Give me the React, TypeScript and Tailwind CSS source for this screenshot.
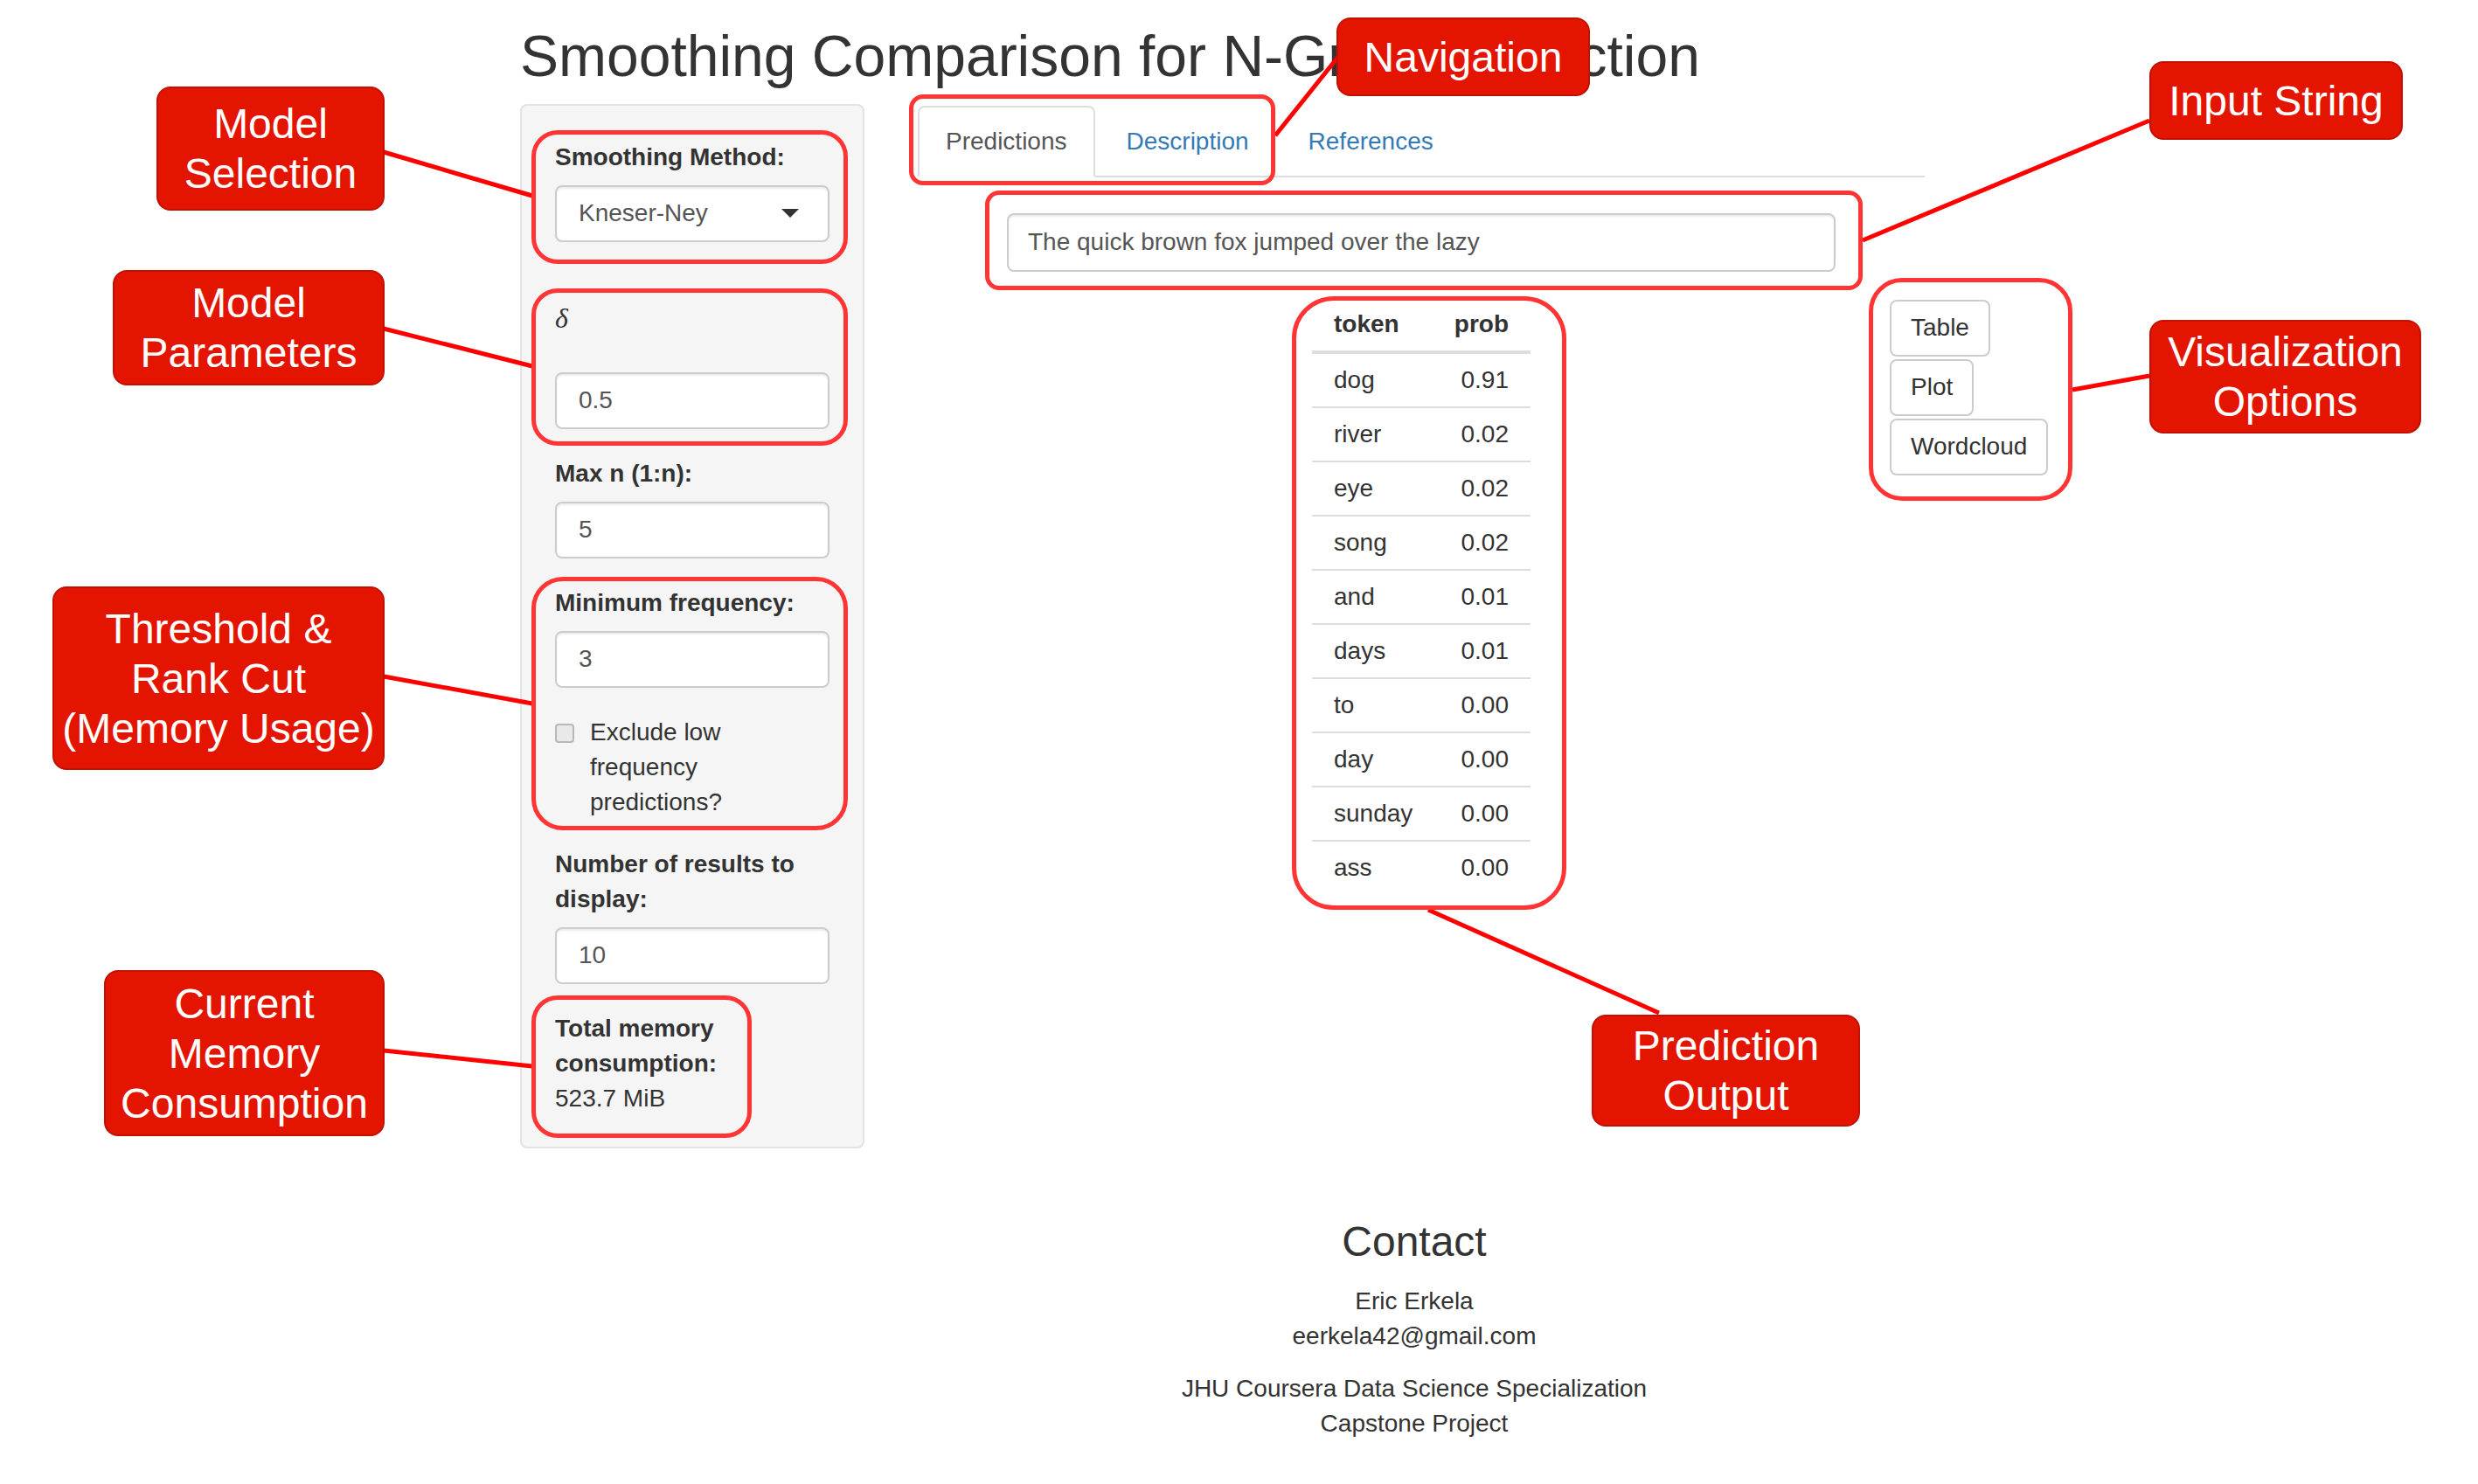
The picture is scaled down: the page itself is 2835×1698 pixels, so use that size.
import clsx from "clsx";

const rows: [string, string][] = [
  ["dog", "0.91"],
  ["river", "0.02"],
  ["eye", "0.02"],
  ["song", "0.02"],
  ["and", "0.01"],
  ["days", "0.01"],
  ["to", "0.00"],
  ["day", "0.00"],
  ["sunday", "0.00"],
  ["ass", "0.00"],
];

const inputCls =
  "h-[65px] bg-white border-2 border-[#ccc] rounded-[8px] shadow-[inset_0_2px_2px_rgba(0,0,0,0.075)] pl-[25px] flex items-center text-[#555]";

const Label = ({ children, className }: { children: React.ReactNode; className?: string }) => (
  <div className={clsx("font-bold mb-[12px]", className)}>{children}</div>
);

const Outline = ({ className }: { className: string }) => (
  <div className={clsx("absolute border-[5px] border-[#ff3535] pointer-events-none", className)} />
);

const Callout = ({ className, children }: { className: string; children: React.ReactNode }) => (
  <div
    className={clsx(
      "absolute bg-[#e31500] border-2 border-[#c21100] rounded-[16px] text-white text-[48px] leading-[57px] text-center flex items-center justify-center",
      className
    )}
  >
    <div>{children}</div>
  </div>
);

const lines = [
  [439, 174, 609, 224],
  [439, 376, 609, 419],
  [439, 774, 609, 805],
  [439, 1202, 609, 1220],
  [1459, 155, 1531, 65],
  [2131, 275, 2459, 138],
  [2371, 446, 2459, 430],
  [1634, 1041, 1898, 1159],
];

export default function App() {
  return (
    <div className="relative w-[2835px] h-[1698px] overflow-hidden bg-white text-[#333] font-['Liberation_Sans',Arial,sans-serif] text-[28px] leading-[40px]">
      <div className="pl-[595px] pt-[28px]">
        <h1 className="text-[66px] leading-[1.1] font-normal mb-[18px]">
          Smoothing Comparison for N-Gram Prediction
        </h1>

        <div className="flex items-start">
          {/* sidebar */}
          <aside className="w-[394px] bg-[#f5f5f5] border-2 border-[#e3e3e3] rounded-[8px] px-[38px] pt-[39px] pb-[35px]">
            <Label>Smoothing Method:</Label>
            <div className={clsx(inputCls, "justify-between pr-[33px] text-[#333] mb-[31px]")}>
              <span>Kneser-Ney</span>
              <svg width="20" height="10" viewBox="0 0 20 10">
                <polygon points="0,0 20,0 10,10" fill="#333" />
              </svg>
            </div>

            <div className="h-[106px] pt-[40px] mb-[12px]">
              <div className="font-['Liberation_Serif',serif] italic text-[32px] leading-none">δ</div>
            </div>
            <div className={clsx(inputCls, "mb-[31px]")}>0.5</div>

            <Label>Max n (1:n):</Label>
            <div className={clsx(inputCls, "mb-[31px]")}>5</div>

            <Label>Minimum frequency:</Label>
            <div className={clsx(inputCls, "mb-[31px]")}>3</div>

            <div className="flex items-start mb-[31px]">
              <div className="w-[22px] h-[22px] mt-[10px] mr-[18px] shrink-0 rounded-[4px] border-2 border-[#b8b8b8] bg-[#e9e9e9]" />
              <div>Exclude low frequency predictions?</div>
            </div>

            <Label>Number of results to display:</Label>
            <div className={clsx(inputCls, "mb-[31px]")}>10</div>

            <div className="font-bold">Total memory consumption:</div>
            <div>523.7 MiB</div>
          </aside>

          {/* main panel */}
          <main className="ml-[61px] w-[1152px] mt-[2px]">
            <nav className="flex border-b-2 border-[#ddd]">
              <div className="-mb-[2px] h-[82px] px-[30px] mr-[4px] flex items-center rounded-t-[8px] border-2 border-[#ddd] border-b-white bg-white text-[#555]">
                Predictions
              </div>
              <div className="-mb-[2px] h-[82px] px-[30px] mr-[4px] flex items-center border-2 border-transparent text-[#337ab7]">
                Description
              </div>
              <div className="-mb-[2px] h-[82px] px-[30px] mr-[4px] flex items-center border-2 border-transparent text-[#337ab7]">
                References
              </div>
            </nav>

            <div className="mx-auto mt-[41px] w-[948px] h-[67px] bg-white border-2 border-[#ccc] rounded-[8px] shadow-[inset_0_2px_2px_rgba(0,0,0,0.075)] pl-[22px] flex items-center text-[#555]">
              The quick brown fox jumped over the lazy
            </div>

            <div className="grid grid-cols-[451px_250px_451px] mt-[30px] items-start">
              <div />
              <div>
                <div className="flex h-[64px] items-center border-b-4 border-[#ddd] font-bold">
                  <div className="w-[125px] pl-[25px]">token</div>
                  <div className="flex-1 text-right pr-[25px]">prob</div>
                </div>
                {rows.map(([t, p], i) => (
                  <div
                    key={t}
                    className={clsx("flex h-[60px] items-center box-content", i > 0 && "border-t-2 border-[#ddd]")}
                  >
                    <div className="w-[125px] pl-[25px]">{t}</div>
                    <div className="flex-1 text-right pr-[25px]">{p}</div>
                  </div>
                ))}
              </div>
              <div className="pl-[411px] flex flex-col items-start gap-[3px] pt-[2px]">
                {["Table", "Plot", "Wordcloud"].map((b) => (
                  <div
                    key={b}
                    className="h-[65px] px-[22px] flex items-center bg-white border-2 border-[#ccc] rounded-[8px] whitespace-nowrap"
                  >
                    {b}
                  </div>
                ))}
              </div>
            </div>
          </main>
        </div>

        {/* footer */}
        <footer className="ml-[455px] w-[1136px] mt-[81px] text-center">
          <h3 className="text-[48px] leading-[1.1] font-normal">Contact</h3>
          <div className="mt-[22px]">Eric Erkela</div>
          <div>eerkela42@gmail.com</div>
          <div className="mt-[20px]">JHU Coursera Data Science Specialization</div>
          <div>Capstone Project</div>
        </footer>
      </div>

      {/* annotation layer */}
      <svg className="absolute left-0 top-0 pointer-events-none" width="2835" height="1698">
        {lines.map(([x1, y1, x2, y2], i) => (
          <line key={i} x1={x1} y1={y1} x2={x2} y2={y2} stroke="#ff0000" strokeWidth="5" />
        ))}
      </svg>

      <Outline className="left-[608px] top-[149px] w-[362px] h-[153px] rounded-[30px]" />
      <Outline className="left-[608px] top-[330px] w-[362px] h-[180px] rounded-[30px]" />
      <Outline className="left-[608px] top-[660px] w-[362px] h-[290px] rounded-[36px]" />
      <Outline className="left-[608px] top-[1139px] w-[252px] h-[163px] rounded-[30px]" />
      <Outline className="left-[1040px] top-[108px] w-[419px] h-[104px] rounded-[16px]" />
      <Outline className="left-[1127px] top-[218px] w-[1004px] h-[114px] rounded-[16px]" />
      <Outline className="left-[1478px] top-[339px] w-[314px] h-[702px] rounded-[48px]" />
      <Outline className="left-[2138px] top-[318px] w-[233px] h-[255px] rounded-[38px]" />

      <Callout className="left-[179px] top-[99px] w-[261px] h-[142px]">
        Model
        <br />
        Selection
      </Callout>
      <Callout className="left-[129px] top-[309px] w-[311px] h-[132px]">
        Model
        <br />
        Parameters
      </Callout>
      <Callout className="left-[60px] top-[671px] w-[380px] h-[210px]">
        Threshold &amp;
        <br />
        Rank Cut
        <br />
        (Memory Usage)
      </Callout>
      <Callout className="left-[119px] top-[1110px] w-[321px] h-[190px]">
        Current
        <br />
        Memory
        <br />
        Consumption
      </Callout>
      <Callout className="left-[1529px] top-[20px] w-[290px] h-[90px]">Navigation</Callout>
      <Callout className="left-[2459px] top-[70px] w-[290px] h-[90px]">Input String</Callout>
      <Callout className="left-[2459px] top-[366px] w-[311px] h-[130px]">
        Visualization
        <br />
        Options
      </Callout>
      <Callout className="left-[1821px] top-[1161px] w-[307px] h-[128px]">
        Prediction
        <br />
        Output
      </Callout>
    </div>
  );
}
